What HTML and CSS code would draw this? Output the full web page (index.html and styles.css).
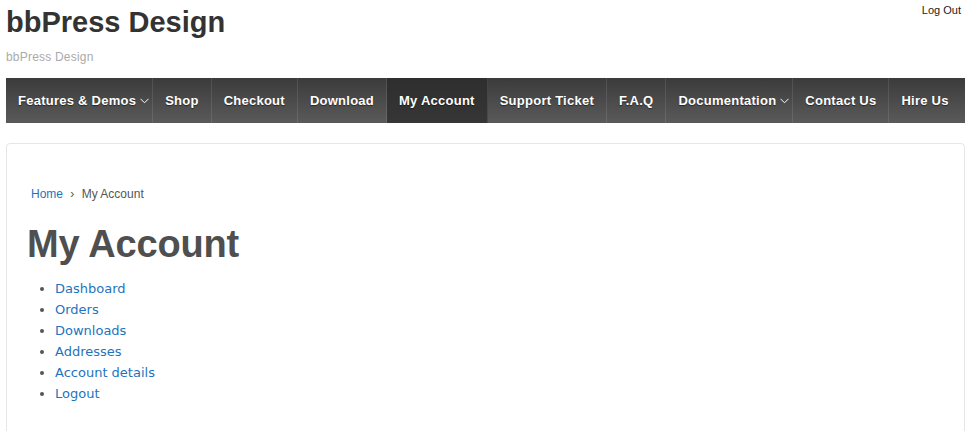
FILE: index.html
```html
<!DOCTYPE html>
<html>
  <head>
    <meta http-equiv="Content-Type" content="text/html; charset=UTF-8">
    <title>My Account | bbPress Design</title>
    <link rel="stylesheet" href="styles.css">
  </head>
  <body>

    <div id="cabecera">
      <div class="marca">
        <div class="titulo_sitio">bbPress Design</div>
        <div class="lema">bbPress Design</div>
      </div>
      <a class="salir" href="#">Log Out</a>
    </div>

    <ul id="menu">
      <li><a href="#">Features &amp; Demos <svg class="flecha" width="9" height="6" viewBox="0 0 9 6"><path d="M0.5 0.8 L4.5 4.8 L8.5 0.8" fill="none" stroke="#fff" stroke-width="1"/></svg></a></li>
      <li><a href="#">Shop</a></li>
      <li><a href="#">Checkout</a></li>
      <li><a href="#">Download</a></li>
      <li class="activo"><a href="#">My Account</a></li>
      <li><a href="#">Support Ticket</a></li>
      <li><a href="#">F.A.Q</a></li>
      <li><a href="#">Documentation <svg class="flecha" width="9" height="6" viewBox="0 0 9 6"><path d="M0.5 0.8 L4.5 4.8 L8.5 0.8" fill="none" stroke="#fff" stroke-width="1"/></svg></a></li>
      <li><a href="#">Contact Us</a></li>
      <li class="ultimo"><a href="#">Hire Us</a></li>
    </ul>

    <div id="contenido">
      <div class="migas">
        <a href="#">Home</a> <span class="sep">&rsaquo;</span> My Account
      </div>
      <h1>My Account</h1>
      <ul class="cuenta">
        <li><a href="#">Dashboard</a></li>
        <li><a href="#">Orders</a></li>
        <li><a href="#">Downloads</a></li>
        <li><a href="#">Addresses</a></li>
        <li><a href="#">Account details</a></li>
        <li><a href="#">Logout</a></li>
      </ul>
    </div>

  </body>
</html>
```

FILE: styles.css
```css
body {
  margin: 0;
  background: #fff;
  color: #333;
  font-family: "Liberation Sans", Arial, sans-serif;
}

a {
  text-decoration: none;
}

#cabecera {
  display: flex;
  justify-content: space-between;
  align-items: flex-start;
  padding: 0 13px 0 6px;
  height: 78px;
}

.titulo_sitio {
  font-size: 29px;
  font-weight: bold;
  line-height: 32px;
  margin-top: 6px;
  color: #333;
}

.lema {
  font-size: 12px;
  letter-spacing: 0.2px;
  color: #aaa;
  margin-top: 12px;
}

.salir {
  font-size: 11px;
  color: #222;
  margin-top: 4px;
}

#menu {
  display: flex;
  list-style: none;
  margin: 0 9px 0 6px;
  padding: 0;
  height: 45px;
  overflow: hidden;
  background: linear-gradient(#3b3b3b, #5a5a5a);
}

#menu li {
  flex-shrink: 0;
  border-right: 1px solid rgba(255, 255, 255, 0.1);
}

#menu li.ultimo {
  border-right: none;
  flex-grow: 1;
  flex-shrink: 1;
}

#menu a {
  display: flex;
  align-items: center;
  height: 45px;
  padding: 0 12px;
  white-space: nowrap;
  color: #fff;
  font-size: 13px;
  font-weight: bold;
  letter-spacing: 0.25px;
  text-shadow: 0 1px 1px rgba(0, 0, 0, 0.5);
}

#menu li:first-child a,
#menu li:nth-child(8) a {
  padding-right: 3px;
}

#menu .flecha {
  margin-left: 4px;
}

#menu li.activo {
  background: linear-gradient(#2e2e2e, #363636);
}

#contenido {
  margin: 20px 9px 0 6px;
  border: 1px solid #e6e6e6;
  border-radius: 4px;
  padding: 41px 20px 40px 20px;
}

.migas {
  font-size: 12px;
  line-height: 18px;
  color: #555;
  padding-left: 4px;
}

.migas a {
  color: #1e73be;
}

.migas .sep {
  margin: 0 4px;
}

h1 {
  font-size: 38px;
  letter-spacing: -0.2px;
  line-height: 43px;
  color: #4f4f4f;
  margin: 20px 0 12px 0;
}

.cuenta {
  margin: 0;
  padding-left: 28px;
  font-family: "DejaVu Sans", sans-serif;
  font-size: 13px;
  line-height: 21px;
  color: #555;
}

.cuenta a {
  color: #1e73be;
}
```
